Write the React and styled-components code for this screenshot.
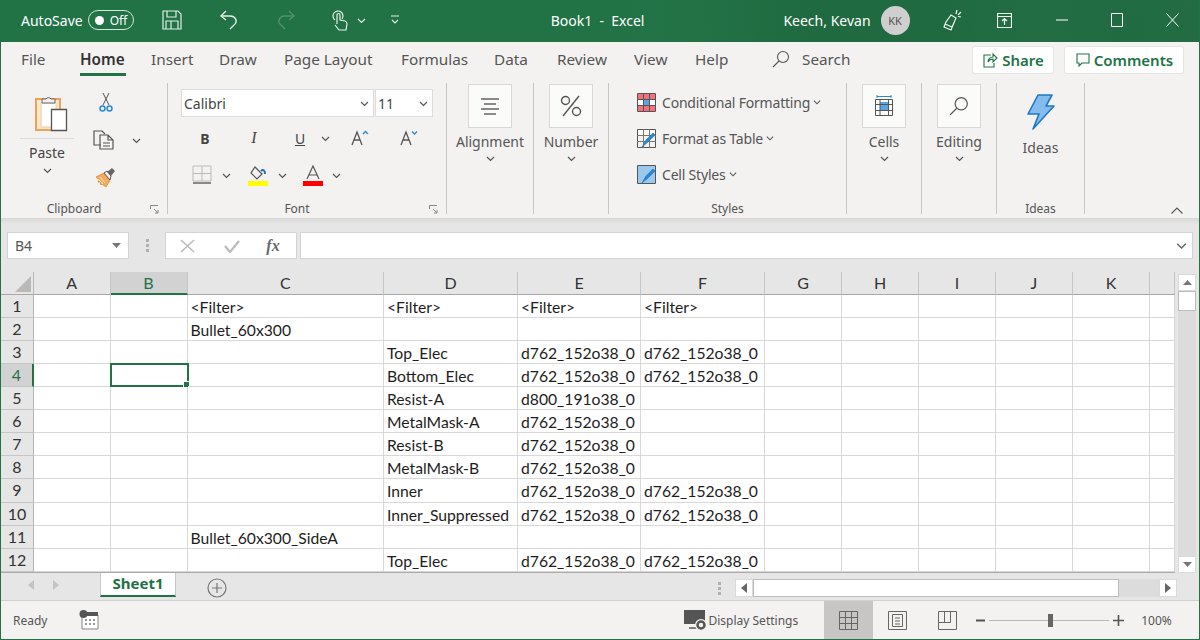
import React from 'react';
import styled, { createGlobalStyle } from 'styled-components';

const Global = createGlobalStyle`
  html, body { margin: 0; padding: 0; background: #fff; }
  * { box-sizing: border-box; }
`;

const UI = '"Noto Sans", "Open Sans", sans-serif';
const GREEN = '#217346';

const Window = styled.div`
  width: 1200px;
  height: 640px;
  display: flex;
  flex-direction: column;
  overflow: hidden;
  background: #f3f2f1;
  border: 1px solid ${GREEN};
  border-top: none;
  font-family: ${UI};
  color: #444;
`;

/* title bar */
const TitleBar = styled.div`
  height: 42px;
  flex: none;
  margin: 0 -1px;
  padding-bottom: 2px;
  display: flex;
  align-items: center;
  color: #fff;
  font-size: 14px;
  background:
    radial-gradient(circle at 880px 10px, #1f6a40 0, #1f6a40 70px, transparent 180px),
    radial-gradient(circle at 1130px 30px, #206b41 0, transparent 140px),
    linear-gradient(90deg, ${GREEN} 0, ${GREEN} 50%, #266c46 100%);
`;

const TitleText = styled.span`
  margin-left: ${p => p.$left}px;
  white-space: pre;
`;

const Toggle = styled.div`
  margin-left: 5px;
  width: 46px;
  height: 20px;
  border: 1px solid #d6e6dc;
  border-radius: 10px;
  display: flex;
  align-items: center;
  padding-left: 6px;
  gap: 6px;
  font-size: 12px;
  &::before {
    content: '';
    width: 9px;
    height: 9px;
    border-radius: 50%;
    background: #fff;
  }
`;

const Slot = styled.div`
  width: ${p => p.$w}px;
  flex: none;
  display: flex;
  align-items: center;
  justify-content: center;
  margin-left: ${p => p.$left || 0}px;
`;

const Mirrored = styled(Slot)`
  transform: scaleX(-1);
`;

const Avatar = styled.div`
  width: 29px;
  height: 29px;
  margin-left: 10px;
  border-radius: 50%;
  background: #cfcfcf;
  color: #555;
  font-size: 11px;
  display: flex;
  align-items: center;
  justify-content: center;
`;

/* tabs */
const TabRow = styled.div`
  height: 40px;
  flex: none;
  display: flex;
  align-items: flex-start;
  padding-left: 20px;
`;

const Tab = styled.div`
  width: ${p => p.$w}px;
  flex: none;
  height: 36px;
  padding-top: 7px;
  font-size: 15.3px;
  line-height: 20px;
  white-space: nowrap;
  position: relative;
  font-weight: ${p => (p.$active ? 600 : 400)};
  color: ${p => (p.$active ? '#333' : '#555')};
  ${p => p.$active && `
    &::after {
      content: '';
      position: absolute;
      left: 0;
      top: 31px;
      width: 46px;
      height: 3px;
      background: ${GREEN};
    }
  `}
`;

const SearchBox = styled.div`
  display: flex;
  align-items: center;
  gap: 12px;
  height: 36px;
  padding-bottom: 2px;
  font-size: 15.3px;
  color: #555;
`;

const ActionButton = styled.div`
  width: ${p => p.$w}px;
  margin-left: ${p => p.$left}px;
  margin-top: 4px;
  flex: none;
  height: 28px;
  background: #fff;
  border: 1px solid #e6e4e2;
  border-radius: 3px;
  display: flex;
  align-items: center;
  justify-content: center;
  gap: 4px;
  font-size: 15px;
  font-weight: 600;
  color: ${GREEN};
`;

/* ribbon */
const Ribbon = styled.div`
  height: 136px;
  flex: none;
  display: flex;
  padding-top: 1px;
  padding-bottom: 4px;
  position: relative;
`;

const Group = styled.div`
  width: ${p => p.$w}px;
  flex: none;
  border-right: 1px solid #c8c6c4;
  display: flex;
  flex-direction: column;
  position: relative;
`;

const GroupBody = styled.div`
  flex: 1;
  min-height: 0;
  display: flex;
  ${p => p.$column && 'flex-direction: column; align-items: center;'}
  padding-top: ${p => p.$top || 0}px;
`;

const GroupLabel = styled.div`
  height: 10px;
  flex: none;
  text-align: center;
  font-size: 12px;
  line-height: 10px;
  white-space: nowrap;
  color: #555;
  padding-right: ${p => p.$pad || 0}px;
`;

const Launcher = styled.svg`
  position: absolute;
  right: 8px;
  bottom: 0;
`;

const PasteColumn = styled.div`
  width: 54px;
  margin-left: 19px;
  display: flex;
  flex-direction: column;
  align-items: center;
  padding-top: 11px;
  font-size: 14px;
  line-height: 18px;
`;

const PasteGlyph = styled.div`
  margin-left: 7px;
  height: 38px;
`;

const PasteRule = styled.div`
  width: 54px;
  height: 1px;
  background: #dcdad8;
  margin: 6px 0 5px;
`;

const PasteChevron = styled.div`
  margin-top: 4px;
  line-height: 0;
`;

const SmallTools = styled.div`
  margin-left: 19px;
  padding-top: 9px;
  display: flex;
  flex-direction: column;
  gap: 15px;
`;

const ToolLine = styled.div`
  display: flex;
  align-items: center;
  height: ${p => p.$h || 22}px;
  margin-top: ${p => p.$top || 0}px;
  padding-left: ${p => p.$left || 0}px;
`;

const FontColumn = styled.div`
  padding: 6px 0 0 13px;
  display: flex;
  flex-direction: column;
`;

const Combo = styled.div`
  width: ${p => p.$w}px;
  height: 28px;
  background: #fff;
  border: 1px solid #dcdcdc;
  display: flex;
  align-items: center;
  justify-content: space-between;
  padding: 0 4px 0 2px;
  font-size: 14px;
  color: #444;
  margin-right: 1px;
`;

const Bold = styled(Slot)`
  font-size: 14px;
  font-weight: 700;
`;

const Italic = styled(Slot)`
  font-family: "Liberation Serif", serif;
  font-style: italic;
  font-size: 16px;
`;

const Underline = styled(Slot)`
  font-size: 14px;
  text-decoration: underline;
`;

const BoxButton = styled.div`
  width: 44px;
  height: 44px;
  margin-top: 1px;
  background: #fbfbfa;
  border: 1px solid #d8d8d6;
  display: flex;
  align-items: center;
  justify-content: center;
`;

const BigLabel = styled.div`
  font-size: 14px;
  line-height: 18px;
  margin-top: ${p => p.$top || 5}px;
  margin-bottom: 3px;
  color: #555;
`;

const StyleRows = styled.div`
  padding: 9px 0 0 28px;
  display: flex;
  flex-direction: column;
  gap: 16px;
`;

const StyleRow = styled.div`
  height: 20px;
  display: flex;
  align-items: center;
  gap: 6px;
  font-size: 14px;
  letter-spacing: -0.2px;
  color: #555;
  white-space: nowrap;
  svg:last-child { margin-left: -3px; }
`;

const Collapse = styled.svg`
  position: absolute;
  left: 1170px;
  bottom: 4px;
`;

const RibbonShadow = styled.div`
  height: 6px;
  flex: none;
  background: linear-gradient(#d8d7d6, #e6e6e6);
`;

/* formula bar */
const FormulaBar = styled.div`
  height: 48px;
  flex: none;
  background: #e6e6e6;
  display: flex;
  padding: 8px 6px 13px 6px;
`;

const NameBox = styled.div`
  width: 122px;
  background: #fff;
  border: 1px solid #d4d4d4;
  display: flex;
  align-items: center;
  justify-content: space-between;
  padding: 0 7px;
  font-size: 14px;
  color: #555;
`;

const BarDots = styled.div`
  width: 36px;
  display: flex;
  justify-content: center;
  align-items: center;
`;

const FxBox = styled.div`
  width: 132px;
  background: #fff;
  border: 1px solid #d4d4d4;
  display: flex;
  align-items: center;
`;

const FxMark = styled.span`
  font-family: "Liberation Serif", serif;
  font-style: italic;
  font-weight: 700;
  font-size: 16px;
  color: #6a6a6a;
`;

const FormulaInput = styled.div`
  flex: 1;
  margin-left: 3px;
  background: #fff;
  border: 1px solid #d4d4d4;
  display: flex;
  align-items: center;
  justify-content: flex-end;
  padding-right: 5px;
`;

/* sheet */
const SheetArea = styled.div`
  height: 301px;
  flex: none;
  display: flex;
  background: #e6e6e6;
`;

const Sheet = styled.div`
  width: 1174px;
  flex: none;
  display: grid;
  grid-template-columns: 33px 76.5px 77px 196.5px 134px 123px 124px 77px 77px 77px 77px 77px 24.5px;
  grid-template-rows: 22.7px repeat(12, 23.1px);
  background: #fff;
  border-right: 1px solid #aaa;
  border-bottom: 1px solid #aaa;
`;

const Corner = styled.div`
  background: #e6e6e6;
  border-right: 1px solid #b5b5b5;
  border-bottom: 1px solid #a8a8a8;
  display: flex;
  align-items: flex-end;
  justify-content: flex-end;
  padding: 0 2px 2px 0;
`;

const ColHead = styled.div`
  background: ${p => (p.$on ? '#d2d2d2' : '#e6e6e6')};
  color: ${p => (p.$on ? GREEN : '#333')};
  border-right: 1px solid #c6c6c6;
  border-bottom: ${p => (p.$on ? `2px solid ${GREEN}` : '1px solid #a8a8a8')};
  font-family: Lato, sans-serif;
  font-size: 16px;
  line-height: 22px;
  text-align: center;
`;

const RowHead = styled.div`
  background: ${p => (p.$on ? '#d2d2d2' : '#e6e6e6')};
  color: ${p => (p.$on ? GREEN : '#333')};
  border-right: ${p => (p.$on ? `2px solid ${GREEN}` : '1px solid #b5b5b5')};
  border-bottom: 1px solid #c6c6c6;
  font-family: Lato, sans-serif;
  font-size: 16px;
  line-height: 22px;
  text-align: center;
`;

const Cell = styled.div`
  border-right: 1px solid #d8d8d8;
  border-bottom: 1px solid #d8d8d8;
  font-family: Lato, sans-serif;
  font-size: 15.7px;
  line-height: 24px;
  color: #1d1d1d;
  padding-left: 3px;
  white-space: nowrap;
  position: relative;
  ${p => p.$selected && `
    &::before {
      content: '';
      position: absolute;
      left: -1px;
      top: -1px;
      right: -2px;
      bottom: -1px;
      border: 2px solid ${GREEN};
    }
    &::after {
      content: '';
      position: absolute;
      right: -3px;
      bottom: -2px;
      width: 5px;
      height: 5px;
      background: ${GREEN};
      border: 1px solid #fff;
    }
  `}
`;

const VScroll = styled.div`
  width: 19px;
  margin-left: 3px;
  flex: none;
  padding-top: 2px;
  display: flex;
  flex-direction: column;
  height: 100%;
`;

const ScrollButton = styled.div`
  height: ${p => p.$h || 17}px;
  width: ${p => p.$w || 18}px;
  flex: none;
  background: #fff;
  border: 1px solid #dadada;
  display: flex;
  align-items: center;
  justify-content: center;
`;

const VThumb = styled.div`
  width: 18px;
  height: 20px;
  flex: none;
  background: #fff;
  border: 1px solid #bdbdbd;
`;

const VTrack = styled.div`
  flex: 1;
  width: 18px;
  background: #dcdcdc;
`;

/* sheet tab bar */
const SheetBar = styled.div`
  height: 28px;
  flex: none;
  background: #e6e6e6;
  border-bottom: 1px solid #d0d0d0;
  display: flex;
  align-items: flex-start;
`;

const NavArrows = styled.div`
  width: 99px;
  height: 24px;
  display: flex;
  align-items: center;
  gap: 19px;
  padding-left: 27px;
  flex: none;
`;

const SheetTab = styled.div`
  width: 76px;
  height: 24px;
  flex: none;
  background: #fff;
  border: 1px solid #c8c8c8;
  border-top: none;
  border-bottom: 2px solid ${GREEN};
  text-align: center;
  color: ${GREEN};
  font-size: 15px;
  font-weight: 700;
  line-height: 20px;
`;

const AddSheet = styled.div`
  margin: 5px 0 0 31px;
  width: 20px;
  height: 20px;
  flex: none;
`;

const HScroll = styled.div`
  margin: 6px 22px 0 auto;
  display: flex;
  height: 18px;
  align-items: stretch;
`;

const HDots = styled(Slot)`
  margin-right: 14px;
`;

const HThumb = styled.div`
  width: 366px;
  background: #fff;
  border: 1px solid #bdbdbd;
`;

const HTrack = styled.div`
  width: 40px;
  background: #dcdcdc;
`;

/* status bar */
const StatusBar = styled.div`
  flex: 1;
  display: flex;
  align-items: stretch;
  font-size: 12px;
  color: #555;
`;

const StatusText = styled.div`
  display: flex;
  align-items: center;
  margin-left: ${p => p.$left}px;
  white-space: nowrap;
`;

const ViewButton = styled.div`
  width: ${p => p.$w || 49}px;
  flex: none;
  background: ${p => (p.$on ? '#c8c6c4' : 'transparent')};
  display: flex;
  align-items: center;
  justify-content: center;
`;

const ZoomSlider = styled.div`
  width: 120px;
  height: 1px;
  margin: 0 4px;
  background: #b8b8b8;
  position: relative;
  &::after {
    content: '';
    position: absolute;
    left: 59px;
    top: -6px;
    width: 5px;
    height: 13px;
    background: #666;
  }
`;

const ZoomWrap = styled.div`
  display: flex;
  align-items: center;
  margin-left: 3px;
`;

const ZoomPct = styled.span`
  margin-left: 17px;
`;

/* icons */
const Chevron = ({ color = '#555', size = 9 }) => (
  <svg width={size} height={size} viewBox="0 0 9 9" fill="none" stroke={color} strokeWidth="1.2">
    <path d="M1 3l3.500 3.500L8 3" />
  </svg>
);

const DownTri = ({ color = '#777' }) => (
  <svg width="9" height="5" viewBox="0 0 9 5"><path d="M0 0h9L4.500 5z" fill={color} /></svg>
);

const SaveIcon = () => (
  <svg width="20" height="20" viewBox="0 0 20 20" fill="none" stroke="#dfeee5" strokeWidth="1.2">
    <path d="M1 1h15l3 3v15H1z" /><path d="M5 1v6h9V1M4 19v-8h12v8M9 11v8" />
  </svg>
);

const UndoIcon = ({ color = '#e8f2ec' }) => (
  <svg width="20" height="20" viewBox="0 0 20 20" fill="none" stroke={color} strokeWidth="1.4">
    <path d="M7 1L2 6l5 4" /><path d="M2 6h9c6 0 8 6 4 9l-4 4" />
  </svg>
);

const TouchIcon = () => (
  <svg width="16" height="22" viewBox="0 0 16 22" fill="none" stroke="#e8f2ec" strokeWidth="1.2">
    <path d="M3 11a5 5 0 1 1 7-1" /><path d="M5 15V6a1.400 1.400 0 0 1 3 0v5l5 1c1.500.500 2 1 2 3l-1 6H7l-4-5" />
  </svg>
);

const QatIcon = () => (
  <svg width="10" height="10" viewBox="0 0 10 10" fill="none" stroke="#e8f2ec" strokeWidth="1.1">
    <path d="M1 1h8M2 5l3 3 3-3" />
  </svg>
);

const PenIcon = () => (
  <svg width="20" height="22" viewBox="0 0 20 22" fill="none" stroke="#f1f7f3" strokeWidth="1.2">
    <path d="M9 6l5 3-3 7-2 5-7-3 2-5zM3 15l7 3M15 1l-1 4M19 3l-3 3M19 8l-3-.500" />
  </svg>
);

const DisplayIcon = () => (
  <svg width="15" height="15" viewBox="0 0 15 15" fill="none" stroke="#f1f7f3" strokeWidth="1.2">
    <path d="M.500.500h14v14H.500zM.500 3.500h14M7.500 12V6M5 8l2.500-2.500L10 8" />
  </svg>
);

const MinIcon = () => <svg width="12" height="2"><path d="M0 1h12" stroke="#fff" /></svg>;
const MaxIcon = () => <svg width="12" height="14"><path d="M.500.500h11v13H.500z" stroke="#fff" fill="none" /></svg>;
const CloseIcon = () => (
  <svg width="13" height="14" viewBox="0 0 13 14" stroke="#fff" fill="none"><path d="M.500.500l12 13M12.500.500l-12 13" /></svg>
);

const SearchIcon = ({ size = 18, color = '#555' }) => (
  <svg width={size} height={size} viewBox="0 0 18 18" fill="none" stroke={color} strokeWidth="1.1">
    <circle cx="11" cy="7" r="5.500" /><path d="M7 11l-6 6" />
  </svg>
);

const ShareIcon = () => (
  <svg width="15" height="16" viewBox="0 0 15 16" fill="none" stroke={GREEN} strokeWidth="1.1">
    <path d="M8 3H1v12h10v-4" /><path d="M5 10c0-3 2-5 5-5V2l4 4-4 4V7c-2 0-4 1-5 3z" />
  </svg>
);

const CommentIcon = () => (
  <svg width="14" height="14" viewBox="0 0 14 14" fill="none" stroke={GREEN} strokeWidth="1.1">
    <path d="M1 1h12v9H6l-3 3v-3H1z" />
  </svg>
);

const PasteIcon = () => (
  <svg width="34" height="38" viewBox="0 0 34 38">
    <path d="M2 5h24v31H2z" fill="#fde9c9" stroke="#eea25a" strokeWidth="2" />
    <path d="M7 9h15v24H7z" fill="#fff" stroke="#f3c79a" />
    <path d="M8 9V5h4a3 3 0 0 1 5 0h4v4z" fill="#f3f2f1" stroke="#666" />
    <path d="M17.500 15.500h15v21h-15z" fill="#fff" stroke="#555" strokeWidth="1.300" />
  </svg>
);

const CutIcon = () => (
  <svg width="14" height="20" viewBox="0 0 14 20" fill="none">
    <path d="M4 12L10 0M10 12L4 0" stroke="#555" />
    <circle cx="3.500" cy="15.500" r="2.500" stroke="#2b88d8" strokeWidth="1.500" />
    <circle cx="10.500" cy="15.500" r="2.500" stroke="#2b88d8" strokeWidth="1.500" />
  </svg>
);

const CopyIcon = () => (
  <svg width="21" height="20" viewBox="0 0 21 20" fill="none" stroke="#555" strokeWidth="1.2">
    <path d="M8 15H1V1h8l3 3" /><path d="M7 5h8l5 5v9H7zM15 5v5h5M10 13h7M10 16h7" />
  </svg>
);

const BrushIcon = () => (
  <svg width="20" height="20" viewBox="0 0 20 20">
    <path d="M0 10l8-4 6 7-4 7-4-3-1 1-1-3-2 0 1-2z" fill="#f6a85c" stroke="#e8872c" strokeWidth=".8" />
    <path d="M4 10l5 6M2 12l5 5" stroke="#fff" strokeWidth=".8" />
    <path d="M8 6l3-2 4 5-1 4z" fill="#f3f2f1" stroke="#555" />
    <path d="M11 5l5-4 3 3-4 5z" fill="#666" />
  </svg>
);

const LetterA = ({ accent, up }) => (
  <svg width="18" height="16" viewBox="0 0 18 16" fill="none">
    <path d="M1 15L6 2l5 13M3 10h6" stroke="#555" strokeWidth="1.300" />
    {accent && <path d={up ? 'M12 4l2.500-2.500L17 4' : 'M12 1.500L14.500 4 17 1.500'} stroke="#2b88d8" strokeWidth="1.300" />}
  </svg>
);

const BorderIcon = () => (
  <svg width="20" height="20" viewBox="0 0 20 20" fill="none">
    <path d="M1 1h18v15H1zM10 1v15M1 8.500h18" stroke="#bbb" />
    <path d="M1 18h18" stroke="#666" strokeWidth="1.500" />
  </svg>
);

const FillIcon = () => (
  <svg width="20" height="21" viewBox="0 0 20 21" fill="none">
    <path d="M7 2l7 7-5 5-6-6z" stroke="#555" strokeWidth="1.200" />
    <path d="M13 6c2-2 4-1 4 3" stroke="#1e6fb8" strokeWidth="2" />
    <path d="M0 16h20v5H0z" fill="#ffff00" />
  </svg>
);

const FontColorIcon = () => (
  <svg width="20" height="21" viewBox="0 0 20 21" fill="none">
    <path d="M4 14L10 1l6 13M6 10h8" stroke="#555" strokeWidth="1.200" />
    <path d="M0 16h20v5H0z" fill="#ff0000" />
  </svg>
);

const AlignIcon = () => (
  <svg width="18" height="17" viewBox="0 0 18 17" stroke="#666" strokeWidth="1.400">
    <path d="M0 1h18M3 6h12M0 11h18M3 16h12" />
  </svg>
);

const PercentIcon = () => (
  <svg width="22" height="22" viewBox="0 0 22 22" fill="none" stroke="#555" strokeWidth="1.400">
    <circle cx="5.500" cy="5.500" r="4" /><circle cx="16.500" cy="16.500" r="4" /><path d="M19 1L3 21" />
  </svg>
);

const CondIcon = () => (
  <svg width="19" height="19" viewBox="0 0 19 19">
    <path d="M0 0h19v19H0z" fill="#fff" />
    <path d="M1 1h17v5H1zM1 13h17v5H1z" fill="#f1707b" />
    <path d="M6 6h6v7H6z" fill="#5ba5e6" />
    <path d="M.500.500h18v18H.500zM6.500 0v19M12.500 0v19M0 6.500h19M0 12.500h19" fill="none" stroke="#555" />
  </svg>
);

const TableIcon = ({ cell }) => (
  <svg width="19" height="19" viewBox="0 0 19 19">
    <path d="M1 1h17v5H1z" fill={cell ? '#9dc8ee' : '#fff'} />
    {cell && <path d="M1 1h17v17H1z" fill="#9dc8ee" />}
    <path d="M.500.500h18v18H.500z" fill="none" stroke="#555" />
    {!cell && <path d="M6.500 0v19M12.500 0v19M0 6.500h19M0 12.500h19" fill="none" stroke="#777" />}
    <path d="M5 18l4-7 7-7 2 2-7 7z" fill="#2b88d8" stroke="#1d6fb5" strokeWidth=".6" />
  </svg>
);

const CellsIcon = () => (
  <svg width="20" height="22" viewBox="0 0 20 22" fill="none">
    <path d="M6 7h9v9H6z" fill="#5ba5e6" />
    <path d="M1.500 4.500h17v16h-17zM1.500 9.500h17M1.500 15.500h17M6 4.500v16M14.500 4.500v16" stroke="#555" />
    <path d="M3 1.500h14M3 0v3M17 0v3" stroke="#2b88d8" />
  </svg>
);

const IdeasIcon = () => (
  <svg width="28" height="36" viewBox="0 0 28 36">
    <path d="M11 1h14l-6 11h8L6 35l6-15H1z" fill="#83bdee" stroke="#1e78c8" strokeWidth="1.600" strokeLinejoin="round" />
  </svg>
);

const MacroIcon = () => (
  <svg width="20" height="20" viewBox="0 0 20 20">
    <path d="M3 5h16v14H3z" fill="#fff" stroke="#888" />
    <path d="M8 2h11v4H8z" fill="#555" />
    <circle cx="4.500" cy="4" r="4" fill="#555" />
    <path d="M6 9h2v2H6zM10 9h2v2h-2zM14 9h2v2h-2zM6 13h2v2H6zM10 13h2v2h-2zM14 13h2v2h-2z" fill="#999" />
  </svg>
);

const MonitorIcon = () => (
  <svg width="24" height="21" viewBox="0 0 24 21">
    <path d="M0 0h21v14H0z" fill="#555" />
    <path d="M5 18h8" stroke="#555" strokeWidth="1.500" />
    <circle cx="17" cy="15" r="6" fill="#f3f2f1" />
    <circle cx="17" cy="15" r="3.500" fill="none" stroke="#555" strokeWidth="2.500" />
  </svg>
);

const NormalView = () => (
  <svg width="19" height="19" viewBox="0 0 19 19" fill="none" stroke="#666">
    <path d="M.500.500h18v18H.500zM6.500 0v19M12.500 0v19M0 6.500h19M0 12.500h19" />
  </svg>
);

const PageView = () => (
  <svg width="19" height="19" viewBox="0 0 19 19" fill="none" stroke="#666">
    <path d="M.500.500h18v18H.500zM4.500 3.500h10v12h-10zM7 7h5M7 10h5M7 13h5" />
  </svg>
);

const BreakView = () => (
  <svg width="19" height="19" viewBox="0 0 19 19" fill="none" stroke="#666">
    <path d="M.500.500h18v18H.500zM.500 11.500h12M6.500.500v11M12.500.500v11" />
  </svg>
);

const Launch = () => (
  <Launcher width="9" height="9" viewBox="0 0 9 9" fill="none" stroke="#888">
    <path d="M.500 4V.500H8M4 4l4 4M8 5v3H5" />
  </Launcher>
);

const Arrow = ({ dir, color }) => (
  <svg width="6" height="10" viewBox="0 0 6 10">
    <path d={dir === 'left' ? 'M6 0v10L0 5z' : 'M0 0v10l6-5z'} fill={color} />
  </svg>
);

const UpTri = () => (
  <svg width="9" height="5" viewBox="0 0 9 5"><path d="M0 5h9L4.500 0z" fill="#777" /></svg>
);

const Dots = () => (
  <svg width="3" height="13" fill="#b0b0b0"><path d="M0 0h3v3H0zM0 5h3v3H0zM0 10h3v3H0z" /></svg>
);

const tabs = [
  ['File', 59], ['Home', 71, true], ['Insert', 68], ['Draw', 65], ['Page Layout', 117],
  ['Formulas', 93], ['Data', 63], ['Review', 77], ['View', 61], ['Help', 77],
];

const columns = ['A', 'B', 'C', 'D', 'E', 'F', 'G', 'H', 'I', 'J', 'K', ''];

const RUN = 'd762_152o38_0';
const rows = [
  { C: '<Filter>', D: '<Filter>', E: '<Filter>', F: '<Filter>' },
  { C: 'Bullet_60x300' },
  { D: 'Top_Elec', E: RUN, F: RUN },
  { D: 'Bottom_Elec', E: RUN, F: RUN },
  { D: 'Resist-A', E: 'd800_191o38_0' },
  { D: 'MetalMask-A', E: RUN },
  { D: 'Resist-B', E: RUN },
  { D: 'MetalMask-B', E: RUN },
  { D: 'Inner', E: RUN, F: RUN },
  { D: 'Inner_Suppressed', E: RUN, F: RUN },
  { C: 'Bullet_60x300_SideA' },
  { D: 'Top_Elec', E: RUN, F: RUN },
];

const App = () => (
  <Window>
    <Global />
    <TitleBar>
      <TitleText $left={21}>AutoSave</TitleText>
      <Toggle>Off</Toggle>
      <Slot $w={20} $left={28}><SaveIcon /></Slot>
      <Slot $w={20} $left={37}><UndoIcon /></Slot>
      <Mirrored $w={20} $left={37}><UndoIcon color="#4f9270" /></Mirrored>
      <Slot $w={16} $left={36}><TouchIcon /></Slot>
      <Slot $w={9} $left={9}><Chevron color="#e8f2ec" /></Slot>
      <Slot $w={10} $left={24}><QatIcon /></Slot>
      <TitleText $left={151}>{'Book1  -  Excel'}</TitleText>
      <TitleText $left={139}>Keech, Kevan</TitleText>
      <Avatar>KK</Avatar>
      <Slot $w={20} $left={32}><PenIcon /></Slot>
      <Slot $w={15} $left={35}><DisplayIcon /></Slot>
      <Slot $w={12} $left={44}><MinIcon /></Slot>
      <Slot $w={12} $left={43}><MaxIcon /></Slot>
      <Slot $w={13} $left={43}><CloseIcon /></Slot>
    </TitleBar>

    <TabRow>
      {tabs.map(([name, w, active]) => (
        <Tab key={name} $w={w} $active={active}>{name}</Tab>
      ))}
      <SearchBox><SearchIcon />Search</SearchBox>
      <ActionButton $w={82} $left={122}><ShareIcon />Share</ActionButton>
      <ActionButton $w={120} $left={10}><CommentIcon />Comments</ActionButton>
    </TabRow>

    <Ribbon>
      <Group $w={167}>
        <GroupBody>
          <PasteColumn>
            <PasteGlyph><PasteIcon /></PasteGlyph>
            <PasteRule />
            Paste
            <PasteChevron><Chevron /></PasteChevron>
          </PasteColumn>
          <SmallTools>
            <ToolLine $left={6}><CutIcon /></ToolLine>
            <ToolLine><CopyIcon /><Slot $w={9} $left={18}><Chevron /></Slot></ToolLine>
            <ToolLine $left={3}><BrushIcon /></ToolLine>
          </SmallTools>
        </GroupBody>
        <GroupLabel $pad={20}>Clipboard</GroupLabel>
        <Launch />
      </Group>

      <Group $w={279}>
        <GroupBody>
          <FontColumn>
            <ToolLine $h={28}>
              <Combo $w={193}>Calibri<Chevron /></Combo>
              <Combo $w={58}>11<Chevron /></Combo>
            </ToolLine>
            <ToolLine $top={10}>
              <Bold $w={48}>B</Bold>
              <Italic $w={50}>I</Italic>
              <Underline $w={42}>U</Underline>
              <Slot $w={9}><Chevron /></Slot>
              <Slot $w={18} $left={21}><LetterA accent up /></Slot>
              <Slot $w={18} $left={31}><LetterA accent /></Slot>
            </ToolLine>
            <ToolLine $left={11} $top={15}>
              <BorderIcon />
              <Slot $w={9} $left={10}><Chevron /></Slot>
              <Slot $w={20} $left={17}><FillIcon /></Slot>
              <Slot $w={9} $left={10}><Chevron /></Slot>
              <Slot $w={20} $left={16}><FontColorIcon /></Slot>
              <Slot $w={9} $left={9}><Chevron /></Slot>
            </ToolLine>
          </FontColumn>
        </GroupBody>
        <GroupLabel $pad={20}>Font</GroupLabel>
        <Launch />
      </Group>

      <Group $w={87}>
        <GroupBody $column>
          <BoxButton><AlignIcon /></BoxButton>
          <BigLabel>Alignment</BigLabel>
          <Chevron />
        </GroupBody>
      </Group>

      <Group $w={75}>
        <GroupBody $column>
          <BoxButton><PercentIcon /></BoxButton>
          <BigLabel>Number</BigLabel>
          <Chevron />
        </GroupBody>
      </Group>

      <Group $w={238}>
        <GroupBody>
          <StyleRows>
            <StyleRow><CondIcon />Conditional Formatting<Chevron size={8} /></StyleRow>
            <StyleRow><TableIcon />Format as Table<Chevron size={8} /></StyleRow>
            <StyleRow><TableIcon cell />Cell Styles<Chevron size={8} /></StyleRow>
          </StyleRows>
        </GroupBody>
        <GroupLabel>Styles</GroupLabel>
      </Group>

      <Group $w={75}>
        <GroupBody $column>
          <BoxButton><CellsIcon /></BoxButton>
          <BigLabel>Cells</BigLabel>
          <Chevron />
        </GroupBody>
      </Group>

      <Group $w={75}>
        <GroupBody $column>
          <BoxButton><SearchIcon size={20} /></BoxButton>
          <BigLabel>Editing</BigLabel>
          <Chevron />
        </GroupBody>
      </Group>

      <Group $w={88}>
        <GroupBody $column $top={11}>
          <IdeasIcon />
          <BigLabel $top={9}>Ideas</BigLabel>
        </GroupBody>
        <GroupLabel>Ideas</GroupLabel>
      </Group>

      <Collapse width="12" height="7" viewBox="0 0 12 7" fill="none" stroke="#555" strokeWidth="1.1">
        <path d="M.500 6.500L6 1l5.500 5.500" />
      </Collapse>
    </Ribbon>
    <RibbonShadow />

    <FormulaBar>
      <NameBox>B4<DownTri /></NameBox>
      <BarDots><Dots /></BarDots>
      <FxBox>
        <Slot $w={42}>
          <svg width="15" height="14" stroke="#bbb" strokeWidth="1.6"><path d="M1 1l13 12M14 1L1 13" /></svg>
        </Slot>
        <Slot $w={48}>
          <svg width="16" height="14" fill="none" stroke="#bbb" strokeWidth="2.2"><path d="M1 7l5 6L15 2" /></svg>
        </Slot>
        <Slot $w={34}><FxMark>fx</FxMark></Slot>
      </FxBox>
      <FormulaInput><Chevron color="#666" size={11} /></FormulaInput>
    </FormulaBar>

    <SheetArea>
      <Sheet>
        <Corner>
          <svg width="16" height="16"><path d="M16 0v16H0z" fill="#b9b9b9" /></svg>
        </Corner>
        {columns.map((c, i) => (
          <ColHead key={i} $on={c === 'B'}>{c}</ColHead>
        ))}
        {rows.map((row, r) => (
          <React.Fragment key={r}>
            <RowHead $on={r === 3}>{r + 1}</RowHead>
            {columns.map((c, i) => (
              <Cell key={i} $selected={r === 3 && c === 'B'}>{row[c]}</Cell>
            ))}
          </React.Fragment>
        ))}
      </Sheet>
      <VScroll>
        <ScrollButton><UpTri /></ScrollButton>
        <VThumb />
        <VTrack />
        <ScrollButton><DownTri /></ScrollButton>
      </VScroll>
    </SheetArea>

    <SheetBar>
      <NavArrows>
        <Arrow dir="left" color="#c4c4c4" />
        <Arrow dir="right" color="#c4c4c4" />
      </NavArrows>
      <SheetTab>Sheet1</SheetTab>
      <AddSheet>
        <svg width="20" height="20" viewBox="0 0 20 20" fill="none" stroke="#777" strokeWidth="1.2">
          <circle cx="10" cy="10" r="9" /><path d="M10 5v10M5 10h10" />
        </svg>
      </AddSheet>
      <HScroll>
        <HDots $w={3}><Dots /></HDots>
        <ScrollButton $h={18}><Arrow dir="left" color="#666" /></ScrollButton>
        <HThumb />
        <HTrack />
        <ScrollButton $h={18}><Arrow dir="right" color="#666" /></ScrollButton>
      </HScroll>
    </SheetBar>

    <StatusBar>
      <StatusText $left={12}>Ready</StatusText>
      <StatusText $left={32}><MacroIcon /></StatusText>
      <StatusText $left={585}><MonitorIcon />Display Settings</StatusText>
      <Slot $w={26} />
      <ViewButton $on><NormalView /></ViewButton>
      <ViewButton><PageView /></ViewButton>
      <ViewButton $w={51}><BreakView /></ViewButton>
      <ZoomWrap>
        <svg width="9" height="3"><path d="M0 1.500h9" stroke="#555" strokeWidth="2" /></svg>
        <ZoomSlider />
        <svg width="11" height="11"><path d="M5.500 0v11M0 5.500h11" stroke="#555" strokeWidth="1.6" /></svg>
        <ZoomPct>100%</ZoomPct>
      </ZoomWrap>
    </StatusBar>
  </Window>
);

export default App;
